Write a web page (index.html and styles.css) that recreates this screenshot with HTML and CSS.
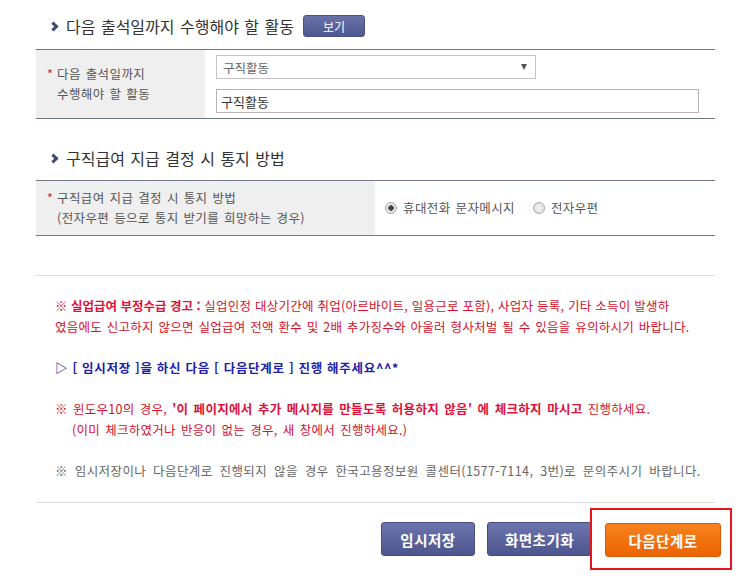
FILE: index.html
```
<!DOCTYPE html>
<html lang="ko">

<head>
    <meta charset="UTF-8">
    <meta name="viewport" content="width=device-width, initial-scale=1.0">
    <title>구직활동 신청</title>
    <link rel="stylesheet" href="styles.css">
</head>

<body>
    <div class="page">
        <h3 class="title">
            <span class="chevron"></span>다음 출석일까지 수행해야 할 활동
            <button type="button" class="btn-view">보기</button>
        </h3>

        <table class="form-table">
            <tr class="row-activity">
                <th class="label label-narrow">
                    <span class="req">*</span>다음 출석일까지<br>수행해야 할 활동
                </th>
                <td class="field">
                    <div class="select-wrap">
                        <select class="select">
                            <option>구직활동</option>
                        </select>
                    </div>
                    <input type="text" class="input" value="구직활동">
                </td>
            </tr>
        </table>

        <h3 class="title title-second">
            <span class="chevron"></span>구직급여 지급 결정 시 통지 방법
        </h3>

        <table class="form-table">
            <tr class="row-notify">
                <th class="label label-wide">
                    <span class="req">*</span>구직급여 지급 결정 시 통지 방법<br>(전자우편 등으로 통지 받기를 희망하는 경우)
                </th>
                <td class="field field-radio">
                    <label class="radio"><span class="radio-dot checked"></span>휴대전화 문자메시지</label>
                    <label class="radio"><span class="radio-dot"></span>전자우편</label>
                </td>
            </tr>
        </table>

        <div class="notice">
            <p class="warn">
                <strong>※ 실업급여 부정수급 경고 :</strong> 실업인정 대상기간에 취업(아르바이트, 일용근로 포함), 사업자 등록, 기타 소득이 발생하<br><span class="wide">였음에도 신고하지 않으면 실업급여 전액 환수 및 2배 추가징수와 아울러 형사처벌 될 수 있음을 유의하시기 바랍니다.</span>
            </p>
            <p class="guide">▷ [ 임시저장 ]을 하신 다음 [ 다음단계로 ] 진행 해주세요^^*</p>
            <p class="warn warn-win">
                ※ 윈도우10의 경우, <strong>'이 페이지에서 추가 메시지를 만들도록 허용하지 않음' 에 체크하지 마시고</strong> 진행하세요.<br>
                <span class="indent">(이미 체크하였거나 반응이 없는 경우, 새 창에서 진행하세요.)</span>
            </p>
            <p class="info">※ 임시저장이나 다음단계로 진행되지 않을 경우 한국고용정보원 콜센터(1577-7114, 3번)로 문의주시기 바랍니다.</p>
        </div>

        <div class="btn-area">
            <button type="button" class="btn btn-blue btn-save">임시저장</button>
            <button type="button" class="btn btn-blue btn-reset">화면초기화</button>
            <div class="highlight">
                <button type="button" class="btn btn-orange">다음단계로</button>
            </div>
        </div>
    </div>
</body>

</html>
```

FILE: styles.css
```
* {
    box-sizing: border-box;
}

body {
    margin: 0;
    background: #fff;
    font-family: "Noto Sans CJK KR", "Noto Sans", sans-serif;
    font-size: 12.5px;
    letter-spacing: 0.4px;
    word-spacing: 1px;
    color: #555;
}

.page {
    width: 679px;
    margin-left: 36px;
}

.title {
    display: flex;
    align-items: center;
    margin: 0;
    padding: 14px 0 11px 14px;
    height: 49px;
    font-size: 16px;
    font-weight: normal;
    color: #333;
    letter-spacing: 0;
    word-spacing: 1px;
    white-space: nowrap;
}

.title-second {
    height: 61px;
    padding-top: 27px;
    padding-bottom: 10px;
}

.chevron {
    display: inline-block;
    width: 7px;
    height: 7px;
    margin-right: 9px;
    border-top: 3px solid #3d4a73;
    border-right: 3px solid #3d4a73;
    transform: rotate(45deg);
}

.btn-view {
    margin-left: 9px;
    width: 62px;
    height: 22px;
    border: 1px solid #4a5186;
    border-radius: 3px;
    background: linear-gradient(#6a72aa, #4f5790);
    color: #fff;
    font-family: inherit;
    font-size: 12px;
    letter-spacing: 0;
    cursor: pointer;
}

/* form tables */
.form-table {
    width: 100%;
    border-collapse: collapse;
    border-top: 1px solid #6f7689;
    border-bottom: 1px solid #6f7689;
}

.form-table th,
.form-table td {
    padding: 0;
    vertical-align: middle;
}

.label {
    background: #efefef;
    text-align: left;
    font-weight: normal;
    color: #555;
    line-height: 20px;
    padding: 0 0 0 21px !important;
}

.label-narrow {
    width: 169px;
}

.label-wide {
    width: 339px;
}

.req {
    color: #b22a3a;
    margin-left: -10px;
    display: inline-block;
    width: 10px;
}

.row-activity {
    height: 68px;
}

.row-notify {
    height: 55px;
}

.field {
    padding: 5px 0 5px 11px !important;
}

.select-wrap {
    position: relative;
    width: 320px;
    height: 24px;
    margin-bottom: 10px;
}

.select-wrap::after {
    content: "";
    position: absolute;
    right: 9px;
    top: 9px;
    border-left: 3px solid transparent;
    border-right: 3px solid transparent;
    border-top: 6px solid #555;
}

.select {
    width: 100%;
    height: 24px;
    padding: 0 6px;
    border: 1px solid #c4c4c4;
    background: #fff;
    font-family: inherit;
    font-size: 12.5px;
    color: #666;
    -webkit-appearance: none;
    appearance: none;
}

.input {
    display: block;
    width: 483px;
    height: 24px;
    padding: 0 4px;
    border: 1px solid #b5b5b5;
    font-family: inherit;
    font-size: 13px;
    color: #333;
}

.field-radio {
    padding-left: 10px !important;
}

.radio {
    display: inline-flex;
    align-items: center;
    margin-right: 13px;
    color: #555;
}

.radio-dot {
    display: inline-block;
    width: 12px;
    height: 12px;
    margin-right: 6px;
    border: 1px solid #a9a9a9;
    border-radius: 50%;
    background: radial-gradient(#f4f4f4, #d8d8d8);
}

.radio-dot.checked {
    background: radial-gradient(circle, #444 0 2.5px, #e6e6e6 3px);
}

/* notice text */
.notice {
    margin-top: 39px;
    padding: 19px 0 21px 19px;
    border-top: 1px solid #dcdcdc;
    border-bottom: 1px solid #dcdcdc;
    line-height: 21px;
    white-space: nowrap;
}

.notice p {
    margin: 0 0 20px;
}

.notice p:last-child {
    margin-bottom: 0;
}

.warn {
    color: #d5102e;
    letter-spacing: 0.25px;
    word-spacing: 0;
}

.warn strong {
    color: #e0103a;
    letter-spacing: 0;
}

.warn .wide {
    word-spacing: 1px;
}

.warn-win {
    word-spacing: 1.5px;
}

.warn-win strong {
    letter-spacing: 0.3px;
}

.guide {
    color: #2121a6;
    font-weight: bold;
    letter-spacing: 0.7px;
    word-spacing: 0;
}

.indent {
    padding-left: 17px;
}

.info {
    color: #666;
    word-spacing: 3px;
}

/* buttons */
.btn-area {
    display: flex;
    align-items: center;
    margin-top: 5px;
    margin-right: -18px;
    padding-left: 345px;
}

.btn {
    flex-shrink: 0;
    height: 34px;
    border-radius: 3px;
    color: #fff;
    font-family: inherit;
    font-size: 14.5px;
    font-weight: bold;
    letter-spacing: 0.5px;
    cursor: pointer;
}

.btn-blue {
    border: 1px solid #464d82;
    background: linear-gradient(#6d75ae, #4d558f);
}

.btn-save {
    width: 94px;
    margin-right: 12px;
}

.btn-reset {
    width: 105px;
}

.highlight {
    flex-shrink: 0;
    width: 142px;
    height: 62px;
    padding: 13px 0 0 13px;
    margin-left: -2px;
    border: 2px solid #e8141c;
}

.btn-orange {
    width: 116px;
    border: 1px solid #d85a00;
    background: linear-gradient(#f7821f, #eb6400);
}
```
